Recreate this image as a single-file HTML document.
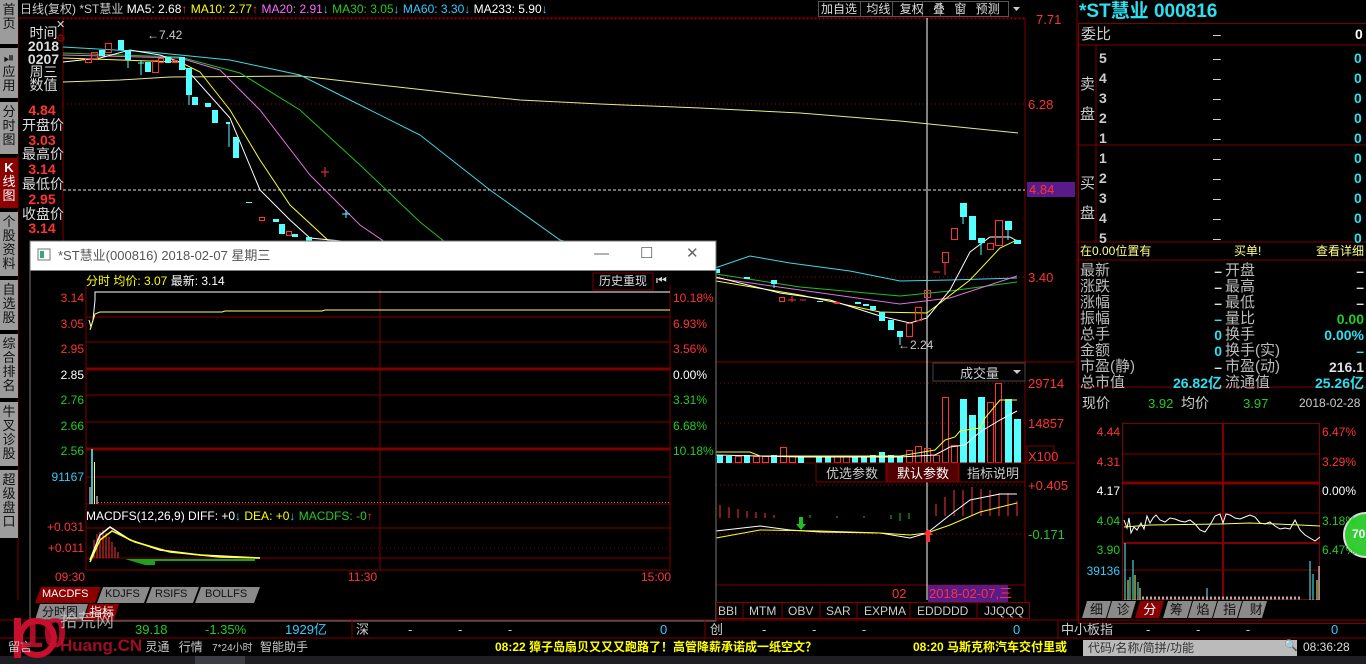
<!DOCTYPE html>
<html><head><meta charset="utf-8">
<style>
*{margin:0;padding:0;box-sizing:border-box}
body{width:1366px;height:664px;background:#000;overflow:hidden;position:relative;font-family:"Liberation Sans","Noto Sans CJK SC",sans-serif;font-size:13px;color:#c8c8c8}
.a{position:absolute;white-space:nowrap;line-height:1}
.side{position:absolute;left:0;width:18px;background:#9c9c9c;color:#111;font-size:13px;line-height:14px;text-align:center;padding-top:3px;border-bottom:2px solid #000}
.r{text-align:right}
.tab{position:absolute;height:16px;background:#8a8a8a;color:#111;font-size:12px;line-height:16px;text-align:center}
</style></head><body>
<svg class="a" style="left:0;top:0" width="1366" height="664">
<!-- main chart frame -->
<g stroke="#800000" fill="none">
<line x1="18" y1="18" x2="1025" y2="18"/>
<line x1="1025" y1="18" x2="1025" y2="602"/>
<line x1="63" y1="18" x2="63" y2="602"/>
<line x1="18" y1="18" x2="18" y2="600"/>
<line x1="63" y1="362" x2="1075" y2="362"/>
<line x1="63" y1="463" x2="1075" y2="463"/>
<line x1="63" y1="585" x2="1025" y2="585"/>
<line x1="1077" y1="0" x2="1077" y2="620"/>
</g>
<g stroke="#a00000" stroke-dasharray="1,3">
<line x1="63" y1="19" x2="1025" y2="19"/><line x1="63" y1="104" x2="1025" y2="104"/><line x1="63" y1="277" x2="1025" y2="277"/>
<line x1="716" y1="383" x2="1025" y2="383"/><line x1="716" y1="423" x2="1025" y2="423"/>
<line x1="716" y1="485" x2="1025" y2="485"/><line x1="716" y1="534" x2="1025" y2="534"/>
</g>
<line x1="63" y1="190" x2="1025" y2="190" stroke="#ddd" stroke-dasharray="3,2"/>
<line x1="927" y1="18" x2="927" y2="600" stroke="#fff"/>
<!-- MA lines -->
<g fill="none" stroke-width="1">
<polyline stroke="#e8e890" points="63,82 120,80 170,77 300,76 380,85 470,95 520,100 600,104 700,108 800,113 900,121 1018,133"/>
<polyline stroke="#40d8e8" points="63,47 150,52 230,60 300,75 350,100 420,135 490,190 560,240 650,262 715,268 750,256 790,263 850,271 900,281 950,280 1017,278"/>
<polyline stroke="#20c020" points="63,53 180,57 240,73 300,110 360,165 420,222 445,242 716,274 800,287 900,296 950,291 1017,282"/>
<polyline stroke="#e070e0" points="63,55 180,58 220,70 260,110 310,175 360,225 385,242 716,278 800,290 900,304 950,298 1017,276"/>
<polyline stroke="#ffff20" points="63,58 180,62 200,72 230,110 260,160 290,205 330,242 716,281 800,295 880,312 927,313 970,280 1000,248 1017,240"/>
<polyline stroke="#fff" points="63,62 100,58 130,50 160,55 180,62 230,118 260,190 290,220 310,238 716,277 780,293 830,300 880,316 910,323 927,318 950,290 970,252 990,237 1010,237 1017,241"/>
</g>
<!-- candles -->
<g fill="#54ffff">
<rect x="99" y="50" width="6" height="6"/><rect x="118" y="40" width="6" height="10"/><rect x="125" y="50" width="6" height="10"/><rect x="145" y="62" width="6" height="10"/><rect x="165" y="57" width="6" height="6"/><rect x="179" y="57" width="6" height="13"/>
<rect x="186" y="68" width="6" height="27"/><rect x="192" y="97" width="6" height="8"/><rect x="205" y="103" width="6" height="4"/><rect x="212" y="110" width="6" height="13"/><rect x="226" y="122" width="4" height="2"/><rect x="233" y="137" width="6" height="21"/><rect x="246" y="202" width="6" height="1"/><rect x="273" y="219" width="6" height="3"/><rect x="279" y="224" width="6" height="10"/><rect x="292" y="234" width="6" height="3"/><rect x="306" y="237" width="6" height="4"/>
<rect x="714" y="269" width="6" height="4"/><rect x="744" y="277" width="6" height="2"/><rect x="771" y="280" width="6" height="4"/><rect x="817" y="301" width="6" height="1"/><rect x="855" y="302" width="6" height="2"/><rect x="863" y="304" width="6" height="2"/><rect x="870" y="306" width="6" height="4"/><rect x="879" y="312" width="6" height="9"/><rect x="888" y="320" width="6" height="10"/><rect x="897" y="331" width="6" height="6"/>
<rect x="960" y="203" width="7" height="14"/><rect x="969" y="216" width="7" height="24"/><rect x="978" y="238" width="7" height="5"/><rect x="1005" y="221" width="7" height="9"/><rect x="1014" y="240" width="7" height="4"/>
</g>
<g stroke="#54ffff">
<line x1="128" y1="50" x2="128" y2="68"/><line x1="189" y1="95" x2="189" y2="105"/><line x1="229" y1="122" x2="229" y2="147"/><line x1="141" y1="60" x2="141" y2="75"/><line x1="138" y1="63" x2="144" y2="63"/>
<line x1="774" y1="280" x2="774" y2="288"/><line x1="900" y1="337" x2="900" y2="345"/><line x1="963" y1="217" x2="963" y2="224"/><line x1="981" y1="243" x2="981" y2="255"/><line x1="1008" y1="230" x2="1008" y2="240"/><line x1="342" y1="214" x2="350" y2="214"/><line x1="346" y1="210" x2="346" y2="218"/>
</g>
<g fill="none" stroke="#ff3232">
<rect x="85.5" y="58.5" width="6" height="4"/><rect x="91.5" y="52.5" width="6" height="6"/><rect x="105.5" y="43.5" width="6" height="9"/><rect x="152.5" y="60.5" width="6" height="12"/><rect x="158.5" y="58.5" width="5" height="4"/><rect x="172.5" y="60.5" width="5" height="2"/>
<line x1="325" y1="167" x2="325" y2="177"/><line x1="321" y1="172" x2="329" y2="172"/><rect x="259.5" y="217.5" width="5" height="3"/><rect x="286.5" y="231.5" width="5" height="4"/>
<rect x="779.5" y="297.5" width="5" height="4"/><line x1="788" y1="300" x2="796" y2="300"/><line x1="792" y1="296" x2="792" y2="302"/><line x1="800" y1="300" x2="806" y2="300"/><rect x="834.5" y="302.5" width="5" height="1"/>
<rect x="906.5" y="323.5" width="6" height="13"/><rect x="915.5" y="307.5" width="6" height="13"/><rect x="924.5" y="290.5" width="6" height="7"/><line x1="933" y1="272" x2="940" y2="272"/><rect x="942.5" y="252.5" width="6" height="10"/><line x1="945" y1="262" x2="945" y2="275"/><rect x="951.5" y="228.5" width="6" height="11"/><rect x="987.5" y="243.5" width="6" height="6"/><rect x="995.5" y="220.5" width="7" height="25"/>
</g>
<!-- volume -->
<g fill="none" stroke="#ff3232">
<rect x="942.5" y="397.5" width="6" height="65"/><rect x="987.5" y="402.5" width="6" height="60"/><rect x="995.5" y="383.5" width="6" height="79"/><rect x="951.5" y="445.5" width="6" height="17"/><rect x="933.5" y="455.5" width="6" height="7"/><rect x="924.5" y="448.5" width="6" height="14"/><rect x="915.5" y="446.5" width="6" height="16"/><rect x="906.5" y="450.5" width="6" height="12"/><rect x="780.5" y="447.5" width="6" height="15"/><rect x="735.5" y="456.5" width="6" height="6"/><rect x="753.5" y="456.5" width="6" height="6"/><rect x="762.5" y="456.5" width="6" height="6"/><rect x="789.5" y="456.5" width="6" height="6"/><rect x="834.5" y="456.5" width="6" height="6"/><rect x="843.5" y="456.5" width="6" height="6"/>
</g>
<g fill="#54ffff">
<rect x="960" y="399" width="7" height="64"/><rect x="969" y="415" width="7" height="48"/><rect x="978" y="397" width="7" height="66"/><rect x="1005" y="399" width="7" height="64"/><rect x="1014" y="419" width="7" height="44"/>
<rect x="717" y="455" width="6" height="8"/><rect x="726" y="456" width="6" height="7"/><rect x="744" y="455" width="6" height="8"/><rect x="771" y="455" width="6" height="8"/><rect x="798" y="456" width="6" height="7"/><rect x="816" y="456" width="6" height="7"/><rect x="825" y="456" width="6" height="7"/><rect x="852" y="456" width="6" height="7"/><rect x="861" y="456" width="6" height="7"/><rect x="870" y="455" width="6" height="8"/><rect x="879" y="452" width="6" height="11"/><rect x="888" y="455" width="6" height="8"/><rect x="897" y="456" width="6" height="7"/>
</g>
<polyline fill="none" stroke="#ffff20" points="716,452 750,452 760,456 900,456 935,450 945,440 955,437 960,431 980,428 985,418 1000,400 1017,400"/>
<polyline fill="none" stroke="#fff" points="716,455 800,457 900,457 935,455 950,447 965,445 980,432 1000,420 1017,411"/>
<!-- macd -->
<g stroke="#ff3232"><line x1="720" y1="505" x2="720" y2="518"/><line x1="729" y1="507" x2="729" y2="518"/><line x1="738" y1="509" x2="738" y2="518"/><line x1="747" y1="511" x2="747" y2="518"/><line x1="756" y1="512" x2="756" y2="518"/><line x1="765" y1="513" x2="765" y2="518"/><line x1="774" y1="515" x2="774" y2="518"/>
<line x1="936" y1="504" x2="936" y2="516"/><line x1="945" y1="497" x2="945" y2="516"/><line x1="954" y1="490" x2="954" y2="516"/><line x1="963" y1="490" x2="963" y2="516"/><line x1="972" y1="487" x2="972" y2="516"/><line x1="981" y1="489" x2="981" y2="516"/><line x1="990" y1="490" x2="990" y2="516"/><line x1="999" y1="493" x2="999" y2="516"/><line x1="1008" y1="493" x2="1008" y2="516"/><line x1="1017" y1="501" x2="1017" y2="516"/></g>
<g stroke="#20c020"><line x1="810" y1="515" x2="810" y2="518"/><line x1="837" y1="516" x2="837" y2="518"/><line x1="864" y1="516" x2="864" y2="518"/><line x1="891" y1="515" x2="891" y2="519"/><line x1="900" y1="513" x2="900" y2="521"/><line x1="909" y1="513" x2="909" y2="519"/></g>
<polyline fill="none" stroke="#fff" points="716,531 760,526 790,530 820,532 880,533 910,538 927,533 950,515 970,500 1000,494 1017,494"/>
<polyline fill="none" stroke="#ffff20" points="716,538 760,530 820,531 880,533 910,535 927,533 950,525 980,512 1017,503"/>
<path d="M799 517h4v7h3l-5 6-5-6h3z" fill="#20c020"/>
<path d="M926 542h4v-7h3l-5-6-5 6h3z" fill="#ff3232"/>
<!-- date box -->
<rect x="928" y="585" width="80" height="17" fill="#5a1b8a"/>
<rect x="1027" y="182" width="48" height="15" fill="#5a1b8a"/>
<rect x="1027" y="446" width="27" height="17" fill="none" stroke="#800000"/>
<!-- popup -->
<rect x="30" y="241" width="686" height="380" fill="#000" stroke="#777"/>
<rect x="30.5" y="241.5" width="685" height="29" fill="#fff"/>
<rect x="38" y="249" width="12" height="11" fill="#fff" stroke="#777"/><rect x="40" y="251" width="4" height="7" fill="#3a7"/>
<g stroke="#800000">
<line x1="86" y1="317" x2="670" y2="317"/><line x1="86" y1="342" x2="670" y2="342"/><line x1="86" y1="395" x2="670" y2="395"/><line x1="86" y1="422" x2="670" y2="422"/><line x1="86" y1="477" x2="670" y2="477"/><line x1="86" y1="504" x2="670" y2="504"/>
<line x1="86" y1="369" x2="670" y2="369" stroke-width="3"/><line x1="86" y1="449" x2="670" y2="449" stroke-width="3"/>
<line x1="380" y1="290" x2="380" y2="570"/><line x1="86" y1="285" x2="86" y2="570"/><line x1="670" y1="285" x2="670" y2="570"/>
<line x1="86" y1="528" x2="670" y2="528"/><line x1="86" y1="558" x2="670" y2="558"/><line x1="86" y1="570" x2="670" y2="570"/>
<rect x="593" y="273" width="60" height="17" fill="none"/><line x1="86" y1="548" x2="670" y2="548" stroke-dasharray="1,3"/>
</g>
<polyline fill="none" stroke="#fff" points="89,320 91,327 93,320 95,300 95,292 670,292"/>
<polyline fill="none" stroke="#ffff60" points="90,330 95,314 100,312 222,312 225,311 322,311 325,310 670,310"/>
<g stroke="#fff"><line x1="90" y1="504" x2="90" y2="487"/><line x1="97" y1="504" x2="97" y2="496"/></g>
<line x1="92" y1="504" x2="92" y2="449" stroke="#54ffff" stroke-width="1.5"/>
<line x1="94.5" y1="504" x2="94.5" y2="462" stroke="#ffff60"/>
<line x1="98" y1="502.5" x2="670" y2="502.5" stroke="#888" stroke-dasharray="1,2"/>
<g stroke="#ff3232"><line x1="94" y1="558" x2="94" y2="540"/><line x1="97" y1="558" x2="97" y2="534"/><line x1="100" y1="558" x2="100" y2="532"/><line x1="103" y1="558" x2="103" y2="530"/><line x1="106" y1="558" x2="106" y2="533"/><line x1="109" y1="558" x2="109" y2="537"/><line x1="112" y1="558" x2="112" y2="542"/><line x1="115" y1="558" x2="115" y2="547"/><line x1="118" y1="558" x2="118" y2="552"/></g>
<path d="M125 559h130v2h-100v4h-10z" fill="#20a020"/>
<polyline fill="none" stroke="#fff" stroke-width="1.5" points="90,560 100,535 110,527 130,540 160,550 200,555 260,558"/>
<polyline fill="none" stroke="#ffff20" stroke-width="1.5" points="90,562 100,540 112,531 135,542 170,552 220,557 260,558"/>
<!-- MACDFS tabs -->
<path d="M35 603l6-16h60l-6 16z" fill="#8b0000"/>
<path d="M97 603l6-16h47l-6 16zM146 603l6-16h47l-6 16zM195 603l6-16h59l-6 16z" fill="#8a8a8a"/>
<path d="M35 620l5-16h48l-5 16z" fill="#8a8a8a"/><path d="M84 620l5-16h30l-5 16z" fill="#8b0000"/>
<!-- bottom rows -->
<line x1="0" y1="620" x2="1366" y2="620" stroke="#800000"/>
<line x1="0" y1="638" x2="1366" y2="638" stroke="#800000"/>
<g stroke="#800000"><line x1="352" y1="620" x2="352" y2="638"/><line x1="705" y1="620" x2="705" y2="638"/><line x1="1058" y1="620" x2="1058" y2="638"/></g>
<rect x="0" y="656" width="1366" height="8" fill="#1e1e24"/><rect x="195" y="656" width="50" height="8" fill="#3c3c44"/>
<rect x="1083" y="640" width="214" height="16" fill="#bbb"/>
<!-- right panel lines -->
<g stroke="#800000" fill="none">
<rect x="1078.5" y="23.5" width="290" height="600"/>
<line x1="1078" y1="45" x2="1366" y2="45"/><line x1="1078" y1="145" x2="1366" y2="145"/><line x1="1078" y1="242" x2="1366" y2="242"/><line x1="1078" y1="260" x2="1366" y2="260"/><line x1="1078" y1="387" x2="1366" y2="387"/>
<line x1="1096" y1="45" x2="1096" y2="242"/>
<rect x="1122.5" y="423.5" width="197" height="176"/>
<line x1="1122" y1="454" x2="1320" y2="454"/><line x1="1122" y1="483" x2="1320" y2="483" stroke-width="3"/><line x1="1122" y1="513" x2="1320" y2="513"/><line x1="1122" y1="543" x2="1320" y2="543" stroke-width="2"/><line x1="1122" y1="570" x2="1320" y2="570"/><line x1="1223" y1="424" x2="1223" y2="600" stroke-width="2"/>
</g>
<polyline fill="none" stroke="#fff" points="1124,520 1127,528 1129,518 1131,533 1134,527 1137,530 1141,523 1144,529 1147,516 1150,523 1153,518 1156,515 1160,520 1165,522 1170,518 1175,519 1180,521 1185,522 1190,520 1195,524 1200,530 1205,532 1210,525 1215,516 1220,514 1223,523 1226,514 1230,515 1235,518 1240,519 1245,517 1250,515 1255,517 1260,523 1265,524 1270,522 1275,526 1280,529 1285,528 1290,529 1295,520 1300,530 1305,535 1310,538 1315,541 1320,537"/>
<polyline fill="none" stroke="#ffff60" points="1124,527 1150,525 1220,524 1250,523 1300,525 1320,526"/>
<g stroke="#54ffff"><line x1="1125" y1="600" x2="1125" y2="543"/><line x1="1130" y1="600" x2="1130" y2="577"/><line x1="1133" y1="600" x2="1133" y2="560"/><line x1="1138" y1="600" x2="1138" y2="582"/><line x1="1207" y1="600" x2="1207" y2="588"/><line x1="1310" y1="600" x2="1310" y2="561"/><line x1="1313" y1="600" x2="1313" y2="574"/></g>
<g stroke="#ffff60"><line x1="1128" y1="600" x2="1128" y2="580"/><line x1="1135" y1="600" x2="1135" y2="575"/><line x1="1140" y1="600" x2="1140" y2="588"/><line x1="1317" y1="600" x2="1317" y2="580"/></g>
<line x1="1319" y1="600" x2="1319" y2="566" stroke="#fff"/>
<line x1="1142" y1="598" x2="1300" y2="598" stroke="#aaa" stroke-dasharray="2,2" stroke-width="3"/>
<circle cx="1366" cy="535" r="22" fill="#3c3" stroke="#ddd" stroke-width="2"/>
<!-- right tabs -->
<path d="M1082 618l5-17h24l-5 17zM1107 618l5-17h24l-5 17zM1163 618l5-17h24l-5 17zM1188 618l5-17h24l-5 17zM1213 618l5-17h24l-5 17zM1238 618l5-17h24l-5 17z" fill="#8a8a8a"/>
<path d="M1135 618l5-17h24l-5 17z" fill="#8b0000"/>
<!-- main bottom tabs -->
<g stroke="#800000" fill="none"><rect x="716.5" y="602.5" width="313" height="16"/><line x1="743" y1="602" x2="743" y2="618"/><line x1="782" y1="602" x2="782" y2="618"/><line x1="820" y1="602" x2="820" y2="618"/><line x1="857" y1="602" x2="857" y2="618"/><line x1="910" y1="602" x2="910" y2="618"/><line x1="977" y1="602" x2="977" y2="618"/></g>
<rect x="816" y="463" width="70" height="19" fill="#000" stroke="#800000"/><rect x="887" y="463" width="71" height="19" fill="#500000" stroke="#800000"/><rect x="959" y="463" width="66" height="19" fill="#000" stroke="#800000"/>
<rect x="933" y="363" width="92" height="18" fill="#000" stroke="#444"/><path d="M1013 370h8l-4 4z" fill="#ccc"/>
<rect x="818" y="1" width="207" height="16" fill="#000"/>
<g stroke="#555" fill="none"><rect x="818.5" y="1.5" width="42" height="15"/><rect x="860.5" y="1.5" width="32" height="15"/><rect x="892.5" y="1.5" width="30" height="15"/><rect x="922.5" y="1.5" width="18" height="15"/><rect x="940.5" y="1.5" width="19" height="15"/><rect x="959.5" y="1.5" width="31" height="15"/><rect x="990.5" y="1.5" width="18" height="15"/></g>
<path d="M1013 7h7l-3.5 4z" fill="#ccc"/>
<!-- watermark -->
<circle cx="37" cy="638" r="17" fill="none" stroke="#c8102e" stroke-width="6"/><rect x="14" y="618" width="7" height="40" fill="#c8102e"/>
</svg>

<!-- sidebar -->
<div class="side" style="top:0;height:46px">首<br>页</div>
<div class="side" style="top:48px;height:52px">⏯<br>应<br>用</div>
<div class="side" style="top:102px;height:54px">分<br>时<br>图</div>
<div class="side" style="top:158px;height:52px;background:#8b0000;color:#fff"><b>K</b><br>线<br>图</div>
<div class="side" style="top:212px;height:66px">个<br>股<br>资<br>料</div>
<div class="side" style="top:280px;height:52px">自<br>选<br>股</div>
<div class="side" style="top:334px;height:66px">综<br>合<br>排<br>名</div>
<div class="side" style="top:402px;height:66px">牛<br>叉<br>诊<br>股</div>
<div class="side" style="top:470px;height:70px">超<br>级<br>盘<br>口</div>

<!-- top bar -->
<div class="a" style="left:20px;top:3px;font-size:12px;color:#ccc">日线(复权) <span style="color:#ccc">*ST慧业</span> <span style="color:#fff">MA5: 2.68</span><span style="color:#f33">↑</span> <span style="color:#ff0">MA10: 2.77</span><span style="color:#f33">↑</span> <span style="color:#f6f">MA20: 2.91</span><span style="color:#3cf">↓</span> <span style="color:#2c2">MA30: 3.05</span><span style="color:#3cf">↓</span> <span style="color:#3cf">MA60: 3.30</span><span style="color:#3cf">↓</span> <span style="color:#fff">MA233: 5.90</span><span style="color:#3cf">↓</span></div>
<div class="a" style="left:821px;top:3px;font-size:12px;color:#ddd;word-spacing:6px">加自选 均线 复权 叠 窗 预测</div>
<div class="a" style="left:56px;top:20px;color:#ddd;font-size:11px">✕</div>
<div class="a" style="left:56px;top:34px;color:#a00;font-size:11px">⚙</div>
<div class="a" style="left:147px;top:29px;color:#ccc;font-size:12px">←7.42</div>
<div class="a" style="left:898px;top:339px;color:#ccc;font-size:12px">←2.24</div>

<!-- info column -->
<div class="a" style="left:26px;top:27px;font-size:14px;line-height:13px;color:#ddd;text-align:center;width:35px">时间<br><b>2018</b><br><b>0207</b><br>周三<br>数值</div>
<div class="a" style="left:22px;top:103px;font-size:14px;line-height:14.8px;color:#ddd;text-align:center;width:40px"><b style="color:#f33">4.84</b><br>开盘价<br><b style="color:#f33">3.03</b><br>最高价<br><b style="color:#f33">3.14</b><br>最低价<br><b style="color:#f33">2.95</b><br>收盘价<br><b style="color:#f33">3.14</b></div>

<!-- axis labels main -->
<div class="a" style="left:1036px;top:13px;color:#f33;font-size:13px">7.71</div>
<div class="a" style="left:1028px;top:98px;color:#f33;font-size:13px">6.28</div>
<div class="a" style="left:1029px;top:183px;color:#f33;font-size:13px">4.84</div>
<div class="a" style="left:1028px;top:271px;color:#f33;font-size:13px">3.40</div>
<div class="a" style="left:960px;top:367px;color:#ccc;font-size:13px">成交量</div>
<div class="a" style="left:1028px;top:377px;color:#f33;font-size:13px">29714</div>
<div class="a" style="left:1028px;top:417px;color:#f33;font-size:13px">14857</div>
<div class="a" style="left:1028px;top:450px;color:#f33;font-size:13px">X100</div>
<div class="a" style="left:826px;top:467px;color:#ccc;font-size:13px">优选参数</div>
<div class="a" style="left:897px;top:467px;color:#fff;font-size:13px">默认参数</div>
<div class="a" style="left:967px;top:467px;color:#ccc;font-size:13px">指标说明</div>
<div class="a" style="left:1028px;top:479px;color:#f33;font-size:13px">+0.405</div>
<div class="a" style="left:1028px;top:528px;color:#2c2;font-size:13px">-0.171</div>
<div class="a" style="left:892px;top:587px;color:#f33;font-size:13px">02</div>
<div class="a" style="left:929px;top:587px;color:#f33;font-size:13px">2018-02-07,三</div>
<div class="a" style="left:718px;top:605px;color:#ccc;font-size:12px">BBI</div>
<div class="a" style="left:749px;top:605px;color:#ccc;font-size:12px">MTM</div>
<div class="a" style="left:788px;top:605px;color:#ccc;font-size:12px">OBV</div>
<div class="a" style="left:826px;top:605px;color:#ccc;font-size:12px">SAR</div>
<div class="a" style="left:864px;top:605px;color:#ccc;font-size:12px">EXPMA</div>
<div class="a" style="left:917px;top:605px;color:#ccc;font-size:12px">EDDDDD</div>
<div class="a" style="left:984px;top:605px;color:#ccc;font-size:12px">JJQQQ</div>

<!-- popup -->
<div class="a" style="left:58px;top:249px;color:#555;font-size:13px">*ST慧业(000816) 2018-02-07 星期三</div>
<div class="a" style="left:594px;top:246px;color:#666;font-size:15px">—</div>
<div class="a" style="left:640px;top:246px;color:#666;font-size:15px">☐</div>
<div class="a" style="left:686px;top:246px;color:#666;font-size:15px">✕</div>
<div class="a" style="left:86px;top:275px;font-size:12px;color:#ff0">分时 均价: 3.07 <span style="color:#fff">最新: 3.14</span></div>
<div class="a" style="left:599px;top:275px;font-size:12px;color:#ddd">历史重现</div>
<div class="a" style="left:656px;top:274px;font-size:12px;color:#ddd">⏮</div>
<div class="a r" style="left:30px;width:54px;top:286px;font-size:12px;line-height:25.5px;color:#f33">3.14<br>3.05<br>2.95<br><span style="color:#fff">2.85</span><br><span style="color:#2c2">2.76<br>2.66<br>2.56</span></div>
<div class="a" style="left:673px;top:286px;font-size:12px;line-height:25.5px;color:#f33">10.18%<br>6.93%<br>3.56%<br><span style="color:#fff">0.00%</span><br><span style="color:#2c2">3.31%<br>6.68%<br>10.18%</span></div>
<div class="a r" style="left:30px;width:54px;top:471px;font-size:12px;color:#3cf">91167</div>
<div class="a" style="left:86px;top:510px;font-size:12px;color:#fff">MACDFS(12,26,9) DIFF: +0<span style="color:#3cf">↓</span> <span style="color:#ff0">DEA: +0</span><span style="color:#3cf">↓</span> <span style="color:#2c2">MACDFS: -0</span><span style="color:#f33">↑</span></div>
<div class="a r" style="left:30px;width:54px;top:521px;font-size:12px;color:#f33">+0.031</div>
<div class="a r" style="left:30px;width:54px;top:542px;font-size:12px;color:#f33">+0.011</div>
<div class="a" style="left:55px;top:571px;font-size:12px;color:#f33">09:30</div>
<div class="a" style="left:348px;top:571px;font-size:12px;color:#f33">11:30</div>
<div class="a" style="left:641px;top:571px;font-size:12px;color:#f33">15:00</div>
<div class="a" style="left:42px;top:589px;font-size:11px;color:#fff">MACDFS</div>
<div class="a" style="left:105px;top:589px;font-size:11px;color:#111">KDJFS</div>
<div class="a" style="left:155px;top:589px;font-size:11px;color:#111">RSIFS</div>
<div class="a" style="left:205px;top:589px;font-size:11px;color:#111">BOLLFS</div>
<div class="a" style="left:42px;top:606px;font-size:12px;color:#111">分时图</div>
<div class="a" style="left:90px;top:606px;font-size:12px;color:#fff">指标</div>

<!-- bottom index row -->
<div class="a" style="left:135px;top:623px;font-size:13px;color:#2c2">39.18</div>
<div class="a" style="left:205px;top:623px;font-size:13px;color:#2c2">-1.35%</div>
<div class="a" style="left:285px;top:623px;font-size:13px;color:#3cf">1929亿</div>
<div class="a" style="left:356px;top:623px;font-size:13px;color:#ccc">深</div>
<div class="a" style="left:408px;top:623px;font-size:13px;color:#ccc;word-spacing:42px">- - -</div>
<div class="a" style="left:660px;top:623px;font-size:13px;color:#3cf">0</div>
<div class="a" style="left:710px;top:623px;font-size:13px;color:#ccc">创</div>
<div class="a" style="left:762px;top:623px;font-size:13px;color:#ccc;word-spacing:42px">- - -</div>
<div class="a" style="left:1013px;top:623px;font-size:13px;color:#3cf">0</div>
<div class="a" style="left:1061px;top:623px;font-size:13px;color:#ccc">中小板指</div>
<div class="a" style="left:1146px;top:623px;font-size:13px;color:#ccc;word-spacing:42px">- - -</div>
<div class="a" style="left:1331px;top:623px;font-size:13px;color:#3cf">0</div>
<!-- status row -->
<div class="a" style="left:8px;top:641px;font-size:12px;color:#ccc">留言 <span style="margin-left:110px">灵通</span> <span style="margin-left:6px">行情</span> <span style="margin-left:6px;font-size:10px">7*24小时</span> <span style="margin-left:4px">智能助手</span></div>
<div class="a" style="left:495px;top:641px;font-size:12px;color:#ff0;font-weight:bold">08:22 獐子岛扇贝又又又跑路了！高管降薪承诺成一纸空文？</div>
<div class="a" style="left:913px;top:641px;font-size:12px;color:#ff0;font-weight:bold">08:20 马斯克称汽车交付里或</div>
<div class="a" style="left:1088px;top:642px;font-size:12px;color:#333">代码/名称/简拼/功能</div>
<div class="a" style="left:1284px;top:641px;font-size:11px;color:#333">🔍</div>
<div class="a" style="left:1303px;top:641px;font-size:12px;color:#ddd">08:36:28</div>
<div class="a" style="left:20px;top:612px;font-size:42px;color:#c8102e;font-weight:bold;opacity:.85">10</div>
<div class="a" style="left:60px;top:612px;font-size:18px;color:#ddd;opacity:.7">拾荒网</div>
<div class="a" style="left:60px;top:637px;font-size:17px;color:#c8102e;font-weight:bold;opacity:.8">Huang.CN</div>

<!-- right panel -->
<div class="a" style="left:1079px;top:2px;font-size:19px;font-weight:bold;color:#2ce0f0">*ST慧业 000816</div>
<div class="a" style="left:1081px;top:27px;font-size:15px;color:#ccc">委比</div>
<div class="a" style="left:1213px;top:27px;font-size:14px;color:#ddd">–</div>
<div class="a" style="left:1355px;top:27px;font-size:14px;color:#fff;font-weight:bold">0</div>
<div class="a" style="left:1080px;top:70px;font-size:15px;line-height:30px;color:#ccc">卖<br>盘</div>
<div class="a" style="left:1080px;top:169px;font-size:15px;line-height:30px;color:#ccc">买<br>盘</div>
<div class="a" style="left:1099px;top:48px;font-size:14px;line-height:20px;color:#ccc;font-weight:bold">5<br>4<br>3<br>2<br>1<br>1<br>2<br>3<br>4<br>5</div>
<div class="a" style="left:1213px;top:48px;font-size:14px;line-height:20px;color:#ddd">–<br>–<br>–<br>–<br>–<br>–<br>–<br>–<br>–<br>–</div>
<div class="a" style="left:1354px;top:48px;font-size:14px;line-height:20px;color:#2ce0f0;font-weight:bold">0<br>0<br>0<br>0<br>0<br>0<br>0<br>0<br>0<br>0</div>
<div class="a" style="left:1080px;top:245px;font-size:12px;color:#ff8">在0.00位置有</div>
<div class="a" style="left:1234px;top:245px;font-size:12px;color:#ff8">买单!</div>
<div class="a" style="left:1316px;top:245px;font-size:12px;color:#ff8">查看详细</div>
<div class="a" style="left:1080px;top:263px;font-size:15px;line-height:16px;color:#bbb">最新<br>涨跌<br>涨幅<br>振幅<br>总手<br>金额<br>市盈(静)<br>总市值</div>
<div class="a" style="left:1225px;top:263px;font-size:15px;line-height:16px;color:#bbb">开盘<br>最高<br>最低<br>量比<br>换手<br>换手(实)<br>市盈(动)<br>流通值</div>
<div class="a r" style="left:1150px;width:72px;top:263px;font-size:14px;line-height:16px;color:#ddd;font-weight:bold">–<br>–<br>–<br><span style="color:#2ce0f0">–</span><br><span style="color:#2ce0f0">0</span><br><span style="color:#2ce0f0">0</span><br>–<br><span style="color:#2ce0f0">26.82亿</span></div>
<div class="a r" style="left:1280px;width:84px;top:263px;font-size:14px;line-height:16px;color:#ddd;font-weight:bold">–<br>–<br>–<br><span style="color:#2c2">0.00</span><br><span style="color:#2ce0f0">0.00%</span><br><span style="color:#2ce0f0">–</span><br>216.1<br><span style="color:#2ce0f0">25.26亿</span></div>
<div class="a" style="left:1082px;top:396px;font-size:14px;color:#ccc">现价</div>
<div class="a" style="left:1148px;top:397px;font-size:13px;color:#2c2">3.92</div>
<div class="a" style="left:1181px;top:396px;font-size:14px;color:#ccc">均价</div>
<div class="a" style="left:1243px;top:397px;font-size:13px;color:#2c2">3.97</div>
<div class="a" style="left:1299px;top:397px;font-size:12px;color:#ccc">2018-02-28</div>
<div class="a r" style="left:1078px;width:42px;top:418px;font-size:12px;line-height:29.5px;color:#f33">4.44<br>4.31<br><span style="color:#fff">4.17</span><br><span style="color:#2c2">4.04<br>3.90</span></div>
<div class="a" style="left:1322px;top:418px;font-size:12px;line-height:29.5px;color:#f33">6.47%<br>3.29%<br><span style="color:#fff">0.00%</span><br><span style="color:#2c2">3.18%<br>6.47%</span></div>
<div class="a r" style="left:1078px;width:42px;top:565px;font-size:12px;color:#3cf">39136</div>
<div class="a" style="left:1352px;top:528px;font-size:12px;color:#fff;font-weight:bold">70</div>
<div class="a" style="left:1090px;top:603px;font-size:13px;color:#111;word-spacing:10px">细 诊 <span style="color:#fff">分</span> 筹 焰 指 财</div>
</body></html>
